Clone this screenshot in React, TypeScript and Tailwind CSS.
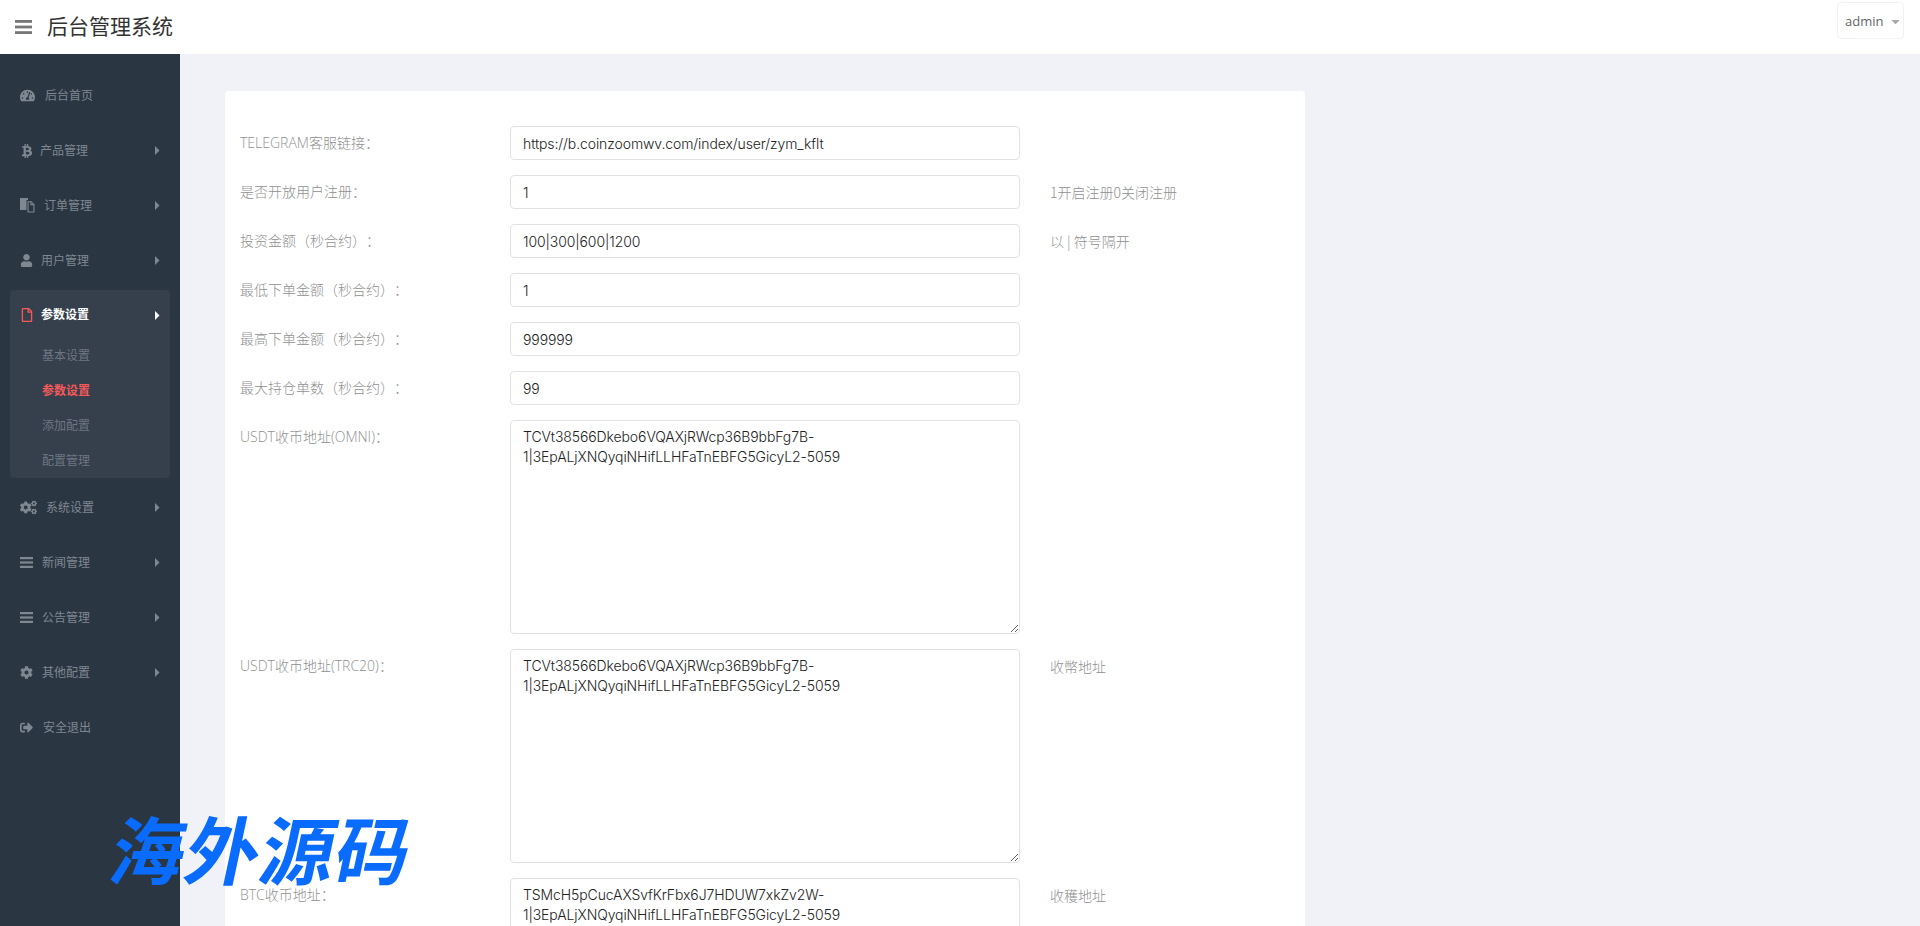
import { ReactNode } from "react";
import { FaBtc, FaCaretDown, FaCog, FaCogs, FaRegFile, FaSignOutAlt, FaTachometerAlt, FaUser } from "react-icons/fa";

const BarsIcon = ({ className }: { className: string }) => (
  <svg viewBox="0 0 14 12" preserveAspectRatio="none" className={className} fill="currentColor">
    <rect width="14" height="2.4" />
    <rect y="4.8" width="14" height="2.4" />
    <rect y="9.6" width="14" height="2.4" />
  </svg>
);

const FilesIcon = () => (
  <svg viewBox="0 0 15 15" className="h-[15px] w-[15px]" fill="currentColor">
    <path d="M0 0h8v2H6.5v10H0z" />
    <path d="M7.5 3.2h4l3 3v8.3h-7zM8.6 4.3v9.1h4.8V7.2h-3V4.3zm2.9.3v1.5H13z" fillRule="evenodd" />
  </svg>
);

const Caret = () => (
  <svg viewBox="0 0 5 9" className="h-[9px] w-[5px] shrink-0" fill="currentColor">
    <path d="M0 0l4.5 4.5L0 9z" />
  </svg>
);

type MenuItem = { label: string; icon: ReactNode; iconBox: string; arrow?: boolean };

const topItems: MenuItem[] = [
  { label: "后台首页", icon: <FaTachometerAlt size={15} />, iconBox: "w-[25px]" },
  { label: "产品管理", icon: <FaBtc size={14} />, iconBox: "w-[20px]", arrow: true },
  { label: "订单管理", icon: <FilesIcon />, iconBox: "w-[24px]", arrow: true },
  { label: "用户管理", icon: <FaUser size={13} />, iconBox: "w-[21px]", arrow: true },
];

const bottomItems: MenuItem[] = [
  { label: "系统设置", icon: <FaCogs size={17} />, iconBox: "w-[26px]", arrow: true },
  { label: "新闻管理", icon: <BarsIcon className="h-[11px] w-[13px]" />, iconBox: "w-[22px]", arrow: true },
  { label: "公告管理", icon: <BarsIcon className="h-[11px] w-[13px]" />, iconBox: "w-[22px]", arrow: true },
  { label: "其他配置", icon: <FaCog size={13} />, iconBox: "w-[22px]", arrow: true },
  { label: "安全退出", icon: <FaSignOutAlt size={13} />, iconBox: "w-[23px]" },
];

const subItems = [
  { label: "基本设置" },
  { label: "参数设置", active: true },
  { label: "添加配置" },
  { label: "配置管理" },
];

const TRON_ADDR = "TCVt38566Dkebo6VQAXjRWcp36B9bbFg7B-1|3EpALjXNQyqiNHifLLHFaTnEBFG5GicyL2-5059";
const BTC_ADDR = "TSMcH5pCucAXSvfKrFbx6J7HDUW7xkZv2W-1|3EpALjXNQyqiNHifLLHFaTnEBFG5GicyL2-5059";

const fields = [
  { label: "TELEGRAM客服链接：", value: "https://b.coinzoomwv.com/index/user/zym_kflt" },
  { label: "是否开放用户注册：", value: "1", help: "1开启注册0关闭注册" },
  { label: "投资金额（秒合约）：", value: "100|300|600|1200", help: "以 | 符号隔开" },
  { label: "最低下单金额（秒合约）：", value: "1" },
  { label: "最高下单金额（秒合约）：", value: "999999" },
  { label: "最大持仓单数（秒合约）：", value: "99" },
  { label: "USDT收币地址(OMNI)：", value: TRON_ADDR, area: true },
  { label: "USDT收币地址(TRC20)：", value: TRON_ADDR, area: true, help: "收幣地址" },
  { label: "BTC收币地址：", value: BTC_ADDR, area: true, help: "收穫地址" },
];

function SideRow({ item }: { item: MenuItem }) {
  return (
    <div className="flex h-[55px] items-center pl-5 pr-5 text-xs text-[#7f8791]">
      <span className={`flex ${item.iconBox} shrink-0 items-center`}>{item.icon}</span>
      <span className="flex-1">{item.label}</span>
      {item.arrow && <Caret />}
    </div>
  );
}

export default function App() {
  return (
    <div className="relative flex h-[926px] flex-col overflow-hidden bg-[#f0f2f7] font-['Open_Sans','Noto_Sans_CJK_SC',sans-serif] [text-spacing-trim:space-all]">
      <header className="flex h-[54px] shrink-0 items-center justify-between bg-white pl-[15px] pr-4">
        <div className="flex items-center gap-[15px]">
          <BarsIcon className="h-[14px] w-[17px] text-[#777]" />
          <h1 className="text-[21px] font-normal text-[#333]">后台管理系统</h1>
        </div>
        <div className="mb-[13px] flex h-[37px] w-[67px] items-center gap-[6px] rounded border border-[#f0f2f7] pl-[7px] pt-[2px] text-[13px] text-[#666]">
          admin
          <FaCaretDown size={13} className="text-[#aaa]" />
        </div>
      </header>

      <div className="flex min-h-0 flex-1">
        <aside className="w-[180px] shrink-0 bg-[#2b3643] pt-[14px]">
          {topItems.map((item) => (
            <SideRow key={item.label} item={item} />
          ))}
          <div className="mx-[10px] my-[2px] h-[188px] rounded bg-[#363f4c]">
            <div className="flex h-[48px] items-center pl-[10px] pr-[10px] pt-[2px] text-xs font-bold text-white">
              <FaRegFile size={14} className="mr-[7px] shrink-0 text-[#f55a5a]" />
              <span className="flex-1">参数设置</span>
              <Caret />
            </div>
            {subItems.map((sub) => (
              <div
                key={sub.label}
                className={`flex h-[35px] items-center pl-8 text-xs ${sub.active ? "font-bold text-[#f55a5a]" : "text-[#6d7682]"}`}
              >
                {sub.label}
              </div>
            ))}
          </div>
          {bottomItems.map((item) => (
            <SideRow key={item.label} item={item} />
          ))}
        </aside>

        <main className="min-w-0 flex-1 pl-[45px] pt-[37px]">
          <div className="flex w-[1080px] flex-col gap-[15px] rounded-sm bg-white pl-[15px] pt-[35px]">
            {fields.map((field) => (
              <div key={field.label} className="flex items-start text-sm">
                <label className="w-[270px] shrink-0 pt-[7px] font-light leading-5 text-[#909090]">{field.label}</label>
                {field.area ? (
                  <textarea
                    readOnly
                    value={field.value}
                    className="h-[214px] w-[510px] shrink-0 rounded border border-[#e2e2e4] bg-white px-3 py-[6px] font-['Inter','Noto_Sans_CJK_SC',sans-serif] font-light leading-5 tracking-[-0.1px] text-[#222] outline-none"
                  />
                ) : (
                  <input
                    readOnly
                    value={field.value}
                    className="h-[34px] w-[510px] shrink-0 rounded border border-[#e2e2e4] bg-white px-3 font-['Inter','Noto_Sans_CJK_SC',sans-serif] font-light leading-5 tracking-[-0.1px] text-[#222] outline-none"
                  />
                )}
                {field.help && (
                  <span className="ml-[30px] pt-[7px] font-['Noto_Sans_CJK_SC',sans-serif] font-light leading-5 text-[#909090]">
                    {field.help}
                  </span>
                )}
              </div>
            ))}
          </div>
        </main>
      </div>

      {/* site watermark sitting over the page */}
      <div className="pointer-events-none absolute left-[112px] top-[806px] -skew-x-12 text-[74px] font-bold leading-[90px] tracking-[1px] text-[#0a6cff]">
        海外源码
      </div>
    </div>
  );
}
